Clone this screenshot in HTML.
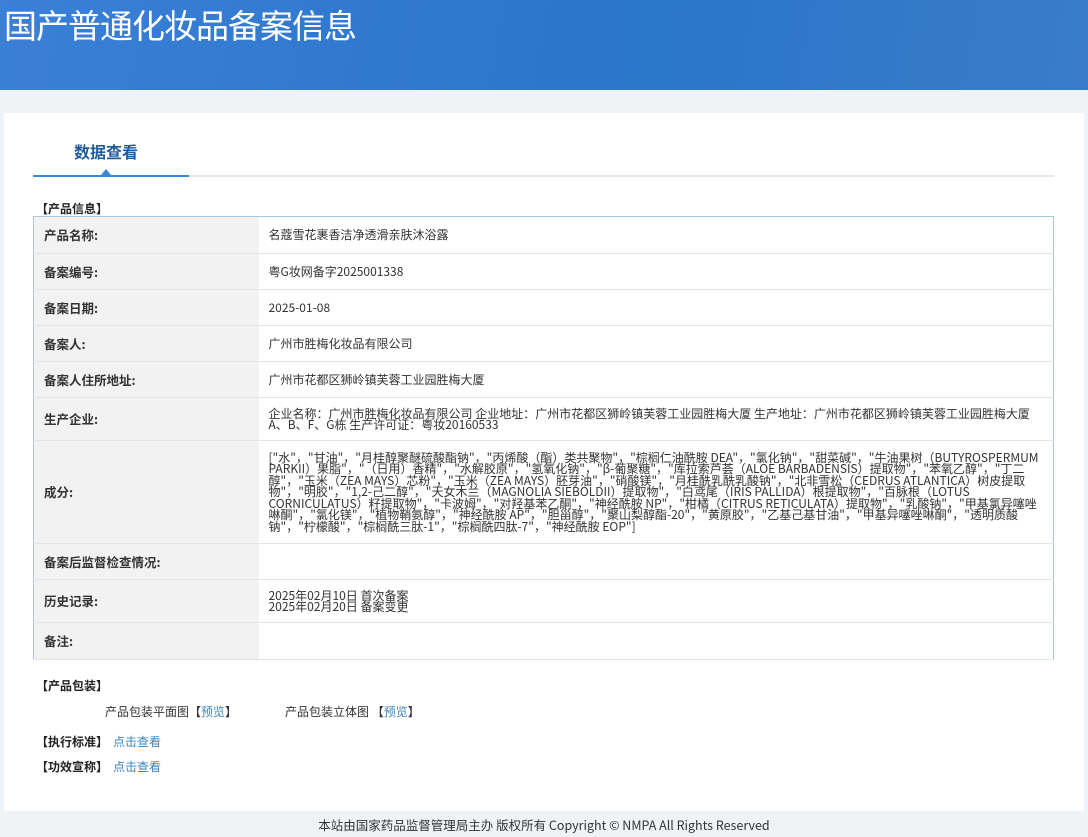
<!DOCTYPE html>
<html><head><meta charset="utf-8"><style>
*{margin:0;padding:0;box-sizing:border-box}
body{width:1088px;height:837px;background:#eff3f6;font-family:"Noto Sans CJK SC","Liberation Sans",sans-serif;font-size:12px;color:#333;position:relative;overflow:hidden}
.hd{position:absolute;left:0;top:0;width:1088px;height:90px;background:linear-gradient(100deg,#3b7fd6 0%,#2f78cf 40%,#2a76c9 60%,#3a7cc9 100%);overflow:hidden}
.hd h1{position:absolute;left:4px;top:0px;font-size:33px;font-weight:normal;color:#fff;letter-spacing:-1px}
.panel{position:absolute;left:4px;top:113px;width:1080px;height:698px;background:#fff}
.tab{position:absolute;left:74px;top:139px;font-size:16px;font-weight:bold;color:#1f5c99}
.gl{position:absolute;left:33px;top:175px;width:1021px;height:2px;background:#e6e6e6}
.bl{position:absolute;left:33px;top:175px;width:156px;height:2px;background:#3a8ad3}
.tri{position:absolute;left:101px;top:169px;width:0;height:0;border-left:5px solid transparent;border-right:5px solid transparent;border-bottom:6px solid #3a8ad3}
.sec{position:absolute;font-weight:bold;font-size:12px;color:#222;line-height:14px}
table{position:absolute;left:33px;top:216px;width:1021px;border-collapse:collapse;border:1px solid #a9c6e0}
td{border-bottom:1px solid #e4e4e4;font-size:12px;line-height:11.5px;vertical-align:middle}
td.l{width:225px;background:#f2f2f2;font-weight:bold;font-size:12.5px;padding-left:10px;color:#333}
td.v{padding:0 10px;color:#333}
a{color:#3a86c0;text-decoration:none}
.ft{position:absolute;top:815px;left:0;width:1088px;text-align:center;font-size:12.5px;color:#333}
</style></head><body>
<div class="hd"><h1>国产普通化妆品备案信息</h1></div>
<div class="panel"></div>
<div class="tab">数据查看</div>
<div class="gl"></div><div class="bl"></div><div class="tri"></div>
<div class="sec" style="left:36px;top:202px">【产品信息】</div>
<table>
<tr style="height:37px"><td class="l">产品名称:</td><td class="v">名蔻雪花裹香洁净透滑亲肤沐浴露</td></tr>
<tr style="height:36px"><td class="l">备案编号:</td><td class="v">粤G妆网备字2025001338</td></tr>
<tr style="height:36px"><td class="l">备案日期:</td><td class="v">2025-01-08</td></tr>
<tr style="height:36px"><td class="l">备案人:</td><td class="v">广州市胜梅化妆品有限公司</td></tr>
<tr style="height:36px"><td class="l">备案人住所地址:</td><td class="v">广州市花都区狮岭镇芙蓉工业园胜梅大厦</td></tr>
<tr style="height:43px"><td class="l">生产企业:</td><td class="v">企业名称：广州市胜梅化妆品有限公司 企业地址：广州市花都区狮岭镇芙蓉工业园胜梅大厦 生产地址：广州市花都区狮岭镇芙蓉工业园胜梅大厦A、B、F、G栋 生产许可证：粤妆20160533</td></tr>
<tr style="height:103px"><td class="l">成分:</td><td class="v">["水"，"甘油"，"月桂醇聚醚硫酸酯钠"，"丙烯酸（酯）类共聚物"，"棕榈仁油酰胺 DEA"，"氯化钠"，"甜菜碱"，"牛油果树（BUTYROSPERMUM PARKII）果脂"，"（日用）香精"，"水解胶原"，"氢氧化钠"，"β-葡聚糖"，"库拉索芦荟（ALOE BARBADENSIS）提取物"，"苯氧乙醇"，"丁二醇"，"玉米（ZEA MAYS）芯粉"，"玉米（ZEA MAYS）胚芽油"，"硝酸镁"，"月桂酰乳酰乳酸钠"，"北非雪松（CEDRUS ATLANTICA）树皮提取物"，"明胶"，"1,2-己二醇"，"天女木兰（MAGNOLIA SIEBOLDII）提取物"，"白鸢尾（IRIS PALLIDA）根提取物"，"百脉根（LOTUS CORNICULATUS）籽提取物"，"卡波姆"，"对羟基苯乙酮"，"神经酰胺 NP"，"柑橘（CITRUS RETICULATA）提取物"，"乳酸钠"，"甲基氯异噻唑啉酮"，"氯化镁"，"植物鞘氨醇"，"神经酰胺 AP"，"胆甾醇"，"聚山梨醇酯-20"，"黄原胶"，"乙基己基甘油"，"甲基异噻唑啉酮"，"透明质酸钠"，"柠檬酸"，"棕榈酰三肽-1"，"棕榈酰四肽-7"，"神经酰胺 EOP"]</td></tr>
<tr style="height:36px"><td class="l">备案后监督检查情况:</td><td class="v"></td></tr>
<tr style="height:43px"><td class="l">历史记录:</td><td class="v">2025年02月10日 首次备案<br>2025年02月20日 备案变更</td></tr>
<tr style="height:37px"><td class="l">备注:</td><td class="v"></td></tr>
</table>
<div class="sec" style="left:36px;top:679px">【产品包装】</div>
<div style="position:absolute;left:105px;top:703px">产品包装平面图【<a>预览</a>】</div>
<div style="position:absolute;left:285px;top:703px">产品包装立体图 【<a>预览</a>】</div>
<div class="sec" style="left:36px;top:735px">【执行标准】</div><a style="position:absolute;left:113px;top:733px">点击查看</a>
<div class="sec" style="left:36px;top:760px">【功效宣称】</div><a style="position:absolute;left:113px;top:758px">点击查看</a>
<div class="ft">本站由国家药品监督管理局主办 版权所有 Copyright © NMPA All Rights Reserved</div>
</body></html>
